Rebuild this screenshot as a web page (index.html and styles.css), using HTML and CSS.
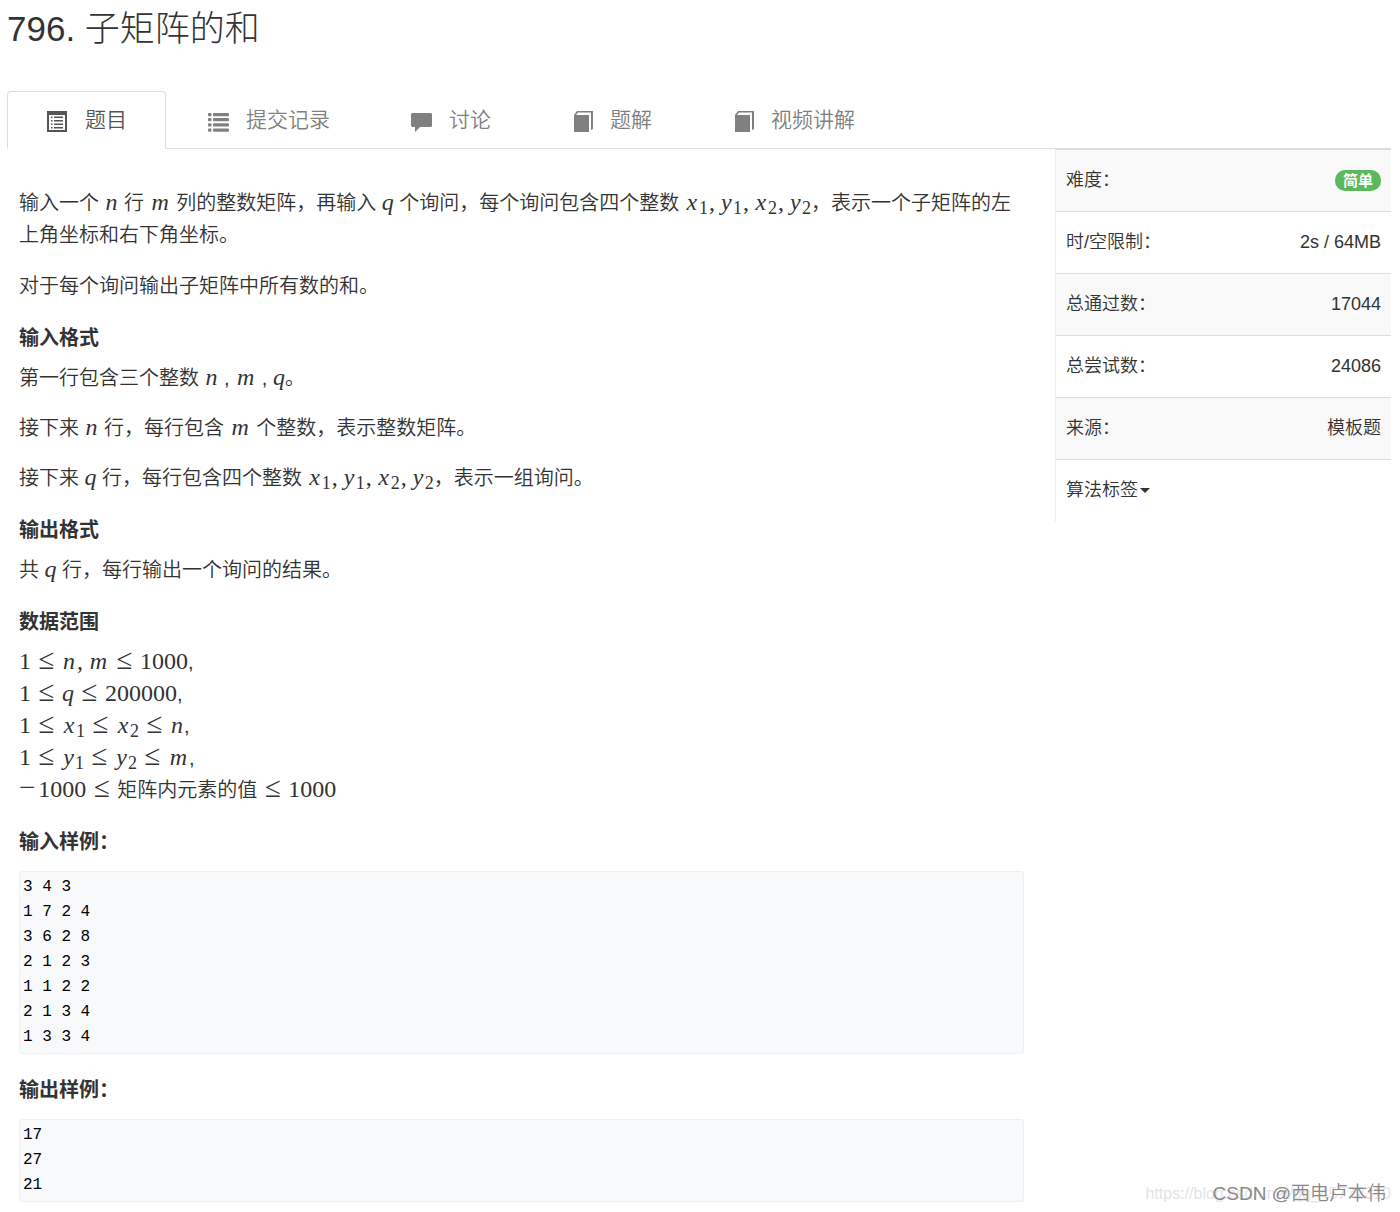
FILE: index.html
```html
<!DOCTYPE html>
<html lang="zh-CN">
<head>
    <meta charset="UTF-8">
    <meta name="viewport" content="width=device-width, initial-scale=1.0">
    <title>796. 子矩阵的和</title>
    <link rel="stylesheet" href="styles.css">
</head>
<body>

    <h1>796. 子矩阵的和</h1>

    <!-- Tabs -->
    <nav class="tabs">
        <a class="tab active" href="#problem">
            <svg class="icon" viewBox="0 0 21 21"><path fill-rule="evenodd" d="M0 0h20v21H0zM2 4v15h16V4z"/><path d="M4 5.500h1.500v1.500H4zM4 9h1.500v1.500H4zM4 12.500h1.500v1.500H4zM4 16h1.500v1.500H4zM7 5.500h9v1.500H7zM7 9h9v1.500H7zM7 12.500h9v1.500H7zM7 16h9v1.500H7z"/></svg>
            题目
        </a>
        <a class="tab" href="#submissions">
            <svg class="icon" viewBox="0 0 21 21"><rect y="2" width="3.500" height="3.300" rx="1"/><rect y="7" width="3.500" height="3.300" rx="1"/><rect y="12.300" width="3.500" height="3.300" rx="1"/><rect y="17.500" width="3.500" height="3.300" rx="1"/><rect x="5" y="2" width="16" height="3.300" rx="1"/><rect x="5" y="7" width="16" height="3.300" rx="1"/><rect x="5" y="12.300" width="16" height="3.300" rx="1"/><rect x="5" y="17.500" width="16" height="3.300" rx="1"/></svg>
            提交记录
        </a>
        <a class="tab" href="#discuss">
            <svg class="icon" viewBox="0 0 21 21"><path d="M1 2h19l1 1v12l-1 1H9l-5 5v-5H1l-1-1V3z"/></svg>
            讨论
        </a>
        <a class="tab" href="#solution">
            <svg class="icon" viewBox="0 0 21 21"><path d="M2 4h15v17H2z"/><path d="M2 4l3-4h16v18l-2 1V1.500H6L4 4z"/></svg>
            题解
        </a>
        <a class="tab" href="#video">
            <svg class="icon" viewBox="0 0 21 21"><path d="M2 4h15v17H2z"/><path d="M2 4l3-4h16v18l-2 1V1.500H6L4 4z"/></svg>
            视频讲解
        </a>
    </nav>

    <div class="content">
        <main class="problem" id="problem">
            <p>输入一个 <span class="math"><i class="n">n</i></span> 行 <span class="math"><i class="m">m</i></span> 列的整数矩阵，再输入 <span class="math"><i class="q">q</i></span> 个询问，每个询问包含四个整数 <span class="math"><i class="x">x</i><sub>1</sub><b>,</b><i class="y">y</i><sub>1</sub><b>,</b><i class="x">x</i><sub>2</sub><b>,</b><i class="y">y</i><sub>2</sub></span>，表示一个子矩阵的左上角坐标和右下角坐标。</p>
            <p>对于每个询问输出子矩阵中所有数的和。</p>

            <h4>输入格式</h4>
            <p>第一行包含三个整数 <span class="math"><i class="n">n</i></span> , <span class="math"><i class="m">m</i></span> , <span class="math"><i class="q">q</i></span>。</p>
            <p>接下来 <span class="math"><i class="n">n</i></span> 行，每行包含 <span class="math"><i class="m">m</i></span> 个整数，表示整数矩阵。</p>
            <p>接下来 <span class="math"><i class="q">q</i></span> 行，每行包含四个整数 <span class="math"><i class="x">x</i><sub>1</sub><b>,</b><i class="y">y</i><sub>1</sub><b>,</b><i class="x">x</i><sub>2</sub><b>,</b><i class="y">y</i><sub>2</sub></span>，表示一组询问。</p>

            <h4>输出格式</h4>
            <p>共 <span class="math"><i class="q">q</i></span> 行，每行输出一个询问的结果。</p>

            <h4>数据范围</h4>
            <p>
                <span class="math">1<em>≤</em><i class="n">n</i><b>,</b><i class="m">m</i><em>≤</em>1000</span>,<br>
                <span class="math">1<em>≤</em><i class="q">q</i><em>≤</em>200000</span>,<br>
                <span class="math">1<em>≤</em><i class="x">x</i><sub>1</sub><em>≤</em><i class="x">x</i><sub>2</sub><em>≤</em><i class="n">n</i></span>,<br>
                <span class="math">1<em>≤</em><i class="y">y</i><sub>1</sub><em>≤</em><i class="y">y</i><sub>2</sub><em>≤</em><i class="m">m</i></span>,<br>
                <span class="math"><span class="minus">−</span>1000<em>≤</em><span class="text">矩阵内元素的值</span><em>≤</em>1000</span>
            </p>

            <h4>输入样例：</h4>
<pre>3 4 3
1 7 2 4
3 6 2 8
2 1 2 3
1 1 2 2
2 1 3 4
1 3 3 4</pre>

            <h4>输出样例：</h4>
<pre>17
27
21</pre>
        </main>

        <aside class="sidebar">
            <table class="info">
                <tr><th scope="row">难度：</th><td><span class="badge">简单</span></td></tr>
                <tr><th scope="row">时/空限制：</th><td>2s / 64MB</td></tr>
                <tr><th scope="row">总通过数：</th><td>17044</td></tr>
                <tr><th scope="row">总尝试数：</th><td>24086</td></tr>
                <tr><th scope="row">来源：</th><td>模板题</td></tr>
                <tr><th colspan="2"><button class="dropdown" type="button">算法标签<span class="caret"></span></button></th></tr>
            </table>
        </aside>
    </div>

    <div class="watermark-url">https://blog.csdn.net/qq_45772310</div>
    <div class="watermark">CSDN @西电卢本伟</div>

</body>
</html>
```
FILE: styles.css
```css
* {
    box-sizing: border-box;
}

body {
    position: relative;
    margin: 0;
    padding: 0 9px 10px 7px;
    font-family: "Liberation Sans", "Noto Sans CJK SC", sans-serif;
    font-size: 20px;
    font-weight: 350;
    line-height: 32px;
    color: #333;
    background: #fff;
}

h1 {
    margin: 0 0 37px;
    padding-top: 4px;
    font-size: 35px;
    font-weight: 300;
    line-height: 50px;
}

/* Tabs */
.tabs {
    display: flex;
    gap: 2px;
    border-bottom: 1px solid #ddd;
}

.tab {
    display: flex;
    align-items: center;
    gap: 17px;
    height: 58px;
    margin-bottom: -1px;
    padding: 0 38px 0 39px;
    border: 1px solid transparent;
    border-radius: 4px 4px 0 0;
    font-size: 21px;
    color: #808080;
    text-decoration: none;
}

.tab.active {
    border-color: #ddd;
    border-bottom-color: #fff;
    background: #fff;
    color: #555;
}

.icon {
    width: 21px;
    height: 21px;
    margin-top: 2px;
    fill: currentColor;
}

.content {
    display: flex;
    align-items: flex-start;
}

/* Problem text */
.problem {
    flex: 1;
    min-width: 0;
    padding: 38px 31px 0 12px;
}

p {
    margin: 0 0 18px;
}

p:first-child {
    margin-bottom: 19px;
}

h4 {
    margin: 25px 0 13px;
    font-size: 20px;
    font-weight: 700;
    line-height: 22px;
}

.math {
    font-family: "Liberation Serif", "Noto Sans CJK SC", serif;
    font-size: 24px;
    font-weight: 400;
    line-height: 1;
    white-space: nowrap;
}

.math i,
.math em,
.math sub {
    display: inline-block;
    text-align: center;
}

.n,
.x {
    width: 14px;
}

.m {
    width: 21px;
}

.q {
    width: 12px;
}

.y {
    width: 13px;
}

.math b {
    display: inline-block;
    width: 12px;
    padding-left: 1px;
    font-weight: 400;
}

.math em {
    width: 31px;
    font-size: 29px;
    font-style: normal;
    line-height: 24px;
}

.math sub {
    width: 9px;
    font-size: 18px;
    line-height: 0;
    vertical-align: -4px;
}

.math .minus {
    margin-right: 3px;
    font-size: 29px;
    line-height: 24px;
}

.math .text {
    font-size: 20px;
    font-weight: 350;
}

pre {
    margin: 0;
    padding: 3px;
    border: 1px solid #eef0f2;
    border-radius: 3px;
    background: #f8f9fb;
    color: #000;
    font-family: "Liberation Mono", monospace;
    font-size: 16px;
    font-weight: 400;
    line-height: 25px;
}

h4:has(+ pre) {
    margin-bottom: 18px;
}

/* Sidebar */
.sidebar {
    flex: 0 0 336px;
    border-left: 1px solid #eee;
}

.info {
    width: 100%;
    border-collapse: collapse;
}

.info th,
.info td {
    height: 62px;
    padding: 0 10px 2px;
    border-top: 1px solid #ddd;
    font-size: 18px;
    font-weight: 350;
    text-align: left;
}

.info td {
    text-align: right;
}

.info tr:nth-child(odd) {
    background: #f9f9f9;
}

.badge {
    display: inline-block;
    padding: 0 8px;
    border-radius: 10px;
    background: #5cb85c;
    color: #fff;
    font-size: 15px;
    font-weight: 700;
    line-height: 21px;
}

.dropdown {
    display: flex;
    align-items: center;
    gap: 2px;
    padding: 0;
    border: 0;
    background: none;
    color: inherit;
    font: inherit;
}

.caret {
    margin-top: 2px;
    border-top: 5px solid #333;
    border-left: 5px solid transparent;
    border-right: 5px solid transparent;
}

/* Watermarks */
.watermark,
.watermark-url {
    position: absolute;
    right: 14px;
    bottom: 2px;
    font-size: 19px;
    color: #888;
}

.watermark-url {
    right: 9px;
    font-size: 16px;
    color: #e4e4e4;
}
```
